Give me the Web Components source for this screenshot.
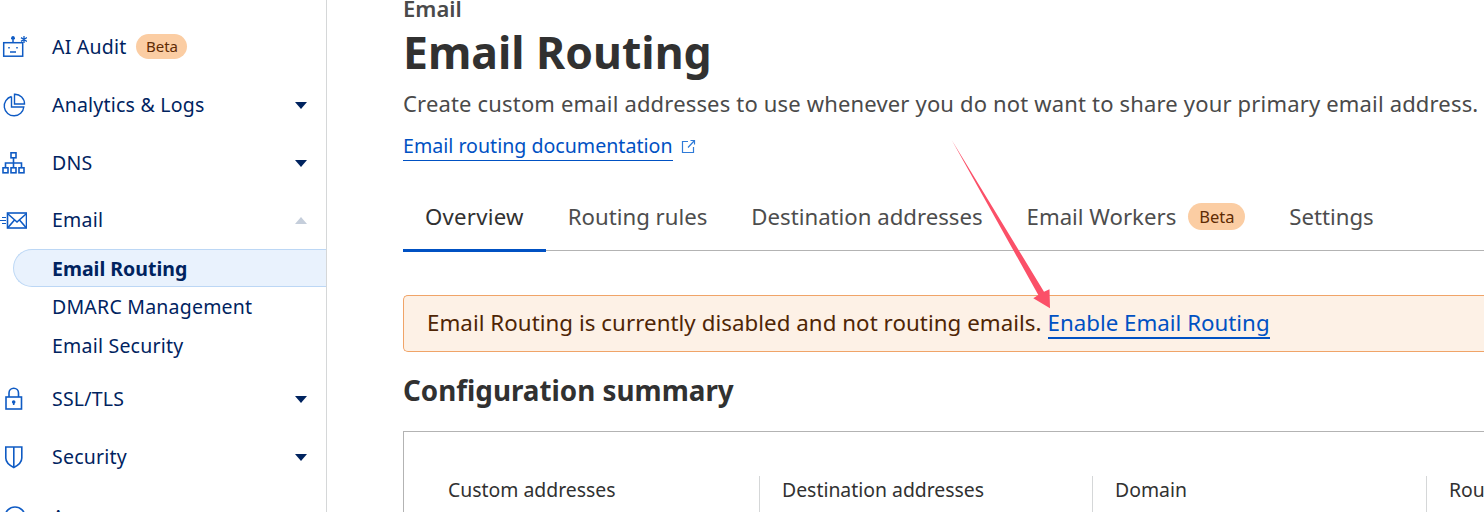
<!DOCTYPE html>
<html lang="en"><head><meta charset="utf-8"><title>Email Routing</title>
<style>
html,body{margin:0;padding:0;height:512px;width:1484px;overflow:hidden;background:#fff;font-family:"Noto Sans","Open Sans",sans-serif}
</style></head><body>
<template id="t-app"><style>
:host{display:flex;width:1484px;height:512px;overflow:hidden;position:relative;background:#fff}
::slotted(dash-sidebar){flex:0 0 327px}
::slotted(dash-main){flex:1 1 auto;min-width:0}
</style><slot></slot><svg style="position:absolute;left:0;top:0;pointer-events:none" width="1484" height="512" viewBox="0 0 1484 512" aria-hidden="true"><polygon points="951.700,140 1044,291.700 1049.500,289.300 1050,308.300 1033.300,298.300 1038.300,295" fill="#fb5068"/></svg></template>

<template id="t-side"><style>
:host{display:block;box-sizing:border-box;height:512px;border-right:1px solid #d5d7d8;overflow:hidden;padding-top:18px;color:#00235f;font-size:19.5px;letter-spacing:.22px}
</style><slot></slot></template>

<template id="t-nav"><style>
:host{display:flex;align-items:center;height:58px;padding-right:19px;box-sizing:border-box}
.i{flex:0 0 52px;display:flex;align-items:center;height:30px}
.l{display:flex;align-items:center;gap:10px;flex:1;padding-bottom:2px}
.c{width:0;height:0;border:6.5px solid transparent;border-top:7px solid #00235f;border-bottom:0}
:host([open]) .c{border-top:0;border-bottom:7px solid #c5cedb}
:host(:not([caret])) .c{display:none}
svg{display:block}
</style><div class="i"><slot name="icon"></slot></div><div class="l"><slot></slot></div><div class="c"></div></template>

<template id="t-sub"><style>
:host{display:flex;align-items:center;height:39px;margin-left:13px;padding-left:39px;box-sizing:border-box;color:#00235f;font-size:19.5px}
:host([active]){height:38px;font-weight:700;letter-spacing:0;background:#e9f2fd;border:1px solid #bcd7f5;border-right:0;border-radius:19px 0 0 19px;padding-left:38px;margin-top:-1px;margin-bottom:0}
</style><slot></slot></template>

<template id="t-badge"><style>
:host{display:inline-flex;align-items:center;justify-content:center;background:#fbcda3;color:#5f2b03;border-radius:13px;font-size:15px;letter-spacing:0;height:25px;width:51px}
:host([lg]){width:57px;height:27px;font-size:16.5px;border-radius:14px}
</style><slot></slot></template>

<template id="t-main"><style>
:host{display:block;padding:0 0 0 76px;margin-top:-3px;color:#313131;min-width:0}
.k{font-size:22px;font-weight:600;line-height:24px;color:#4a4a4a;margin-top:-1px}
h1{margin:0;font-size:44.500px;font-weight:700;line-height:60px;margin-top:2px}
p{margin:0;font-size:22px;letter-spacing:.17px;line-height:30px;color:#4a4a4a;margin-top:6px;white-space:nowrap}
.d{display:flex;align-items:center;gap:8px;margin-top:13px;height:30px;color:#0051c3;font-size:19.6px}
.d a{color:inherit;text-decoration:none;border-bottom:1px solid #0051c3;line-height:28px}
h2{margin:19px 0 0;font-size:27.800px;font-weight:700;line-height:38px}
</style><div class="k">Email</div><h1>Email Routing</h1>
<p>Create custom email addresses to use whenever you do not want to share your primary email address.</p>
<div class="d"><a href="#">Email routing documentation</a><svg width="15" height="15" viewBox="0 0 15 15" fill="none" stroke="#2f7bd8" stroke-width="1.2"><path d="M7 2.500H1.500v11h11V8"/><path d="M7 8.500 13.500 1.500M9.500 1.500h4v4"/></svg></div>
<slot name="tabs"></slot><slot name="banner"></slot><h2>Configuration summary</h2><slot name="summary"></slot></template>

<template id="t-tabs"><style>
:host{display:flex;margin-top:25px;border-bottom:1px solid #b3b3b3;box-sizing:content-box;height:64px}
</style><slot></slot></template>

<template id="t-tab"><style>
:host{display:flex;align-items:center;gap:12px;padding:0 22px 4px;height:64px;font-size:22.200px;color:#4d4d4d;box-sizing:border-box;white-space:nowrap}
:host([active]){color:#313131;letter-spacing:.25px;box-shadow:inset 0 -3px 0 #0051c3;height:66px;padding-bottom:6px}
</style><slot></slot></template>

<template id="t-banner"><style>
:host{display:flex;align-items:center;box-sizing:border-box;height:57px;margin-top:44px;padding:0 0 2px 23px;background:#fdf1e6;border:1px solid #f0a468;border-right:0;border-radius:5px 0 0 5px;color:#4f2505;font-size:22.300px;letter-spacing:.05px;white-space:nowrap;gap:6px}
a{color:#0051c3;letter-spacing:0;text-decoration:none;border-bottom:2px solid #0051c3;line-height:28px;margin-top:2px}
</style><slot></slot><a href="#"><slot name="link"></slot></a></template>

<template id="t-sum"><style>
:host{display:grid;grid-template-columns:355px 333px 334px 334px;margin-top:22px;border:1px solid #b3b3b3;border-right:0;border-bottom:0;box-sizing:border-box;height:100px;padding-top:44px}
</style><slot></slot></template>

<template id="t-cell"><style>
:host{display:block;box-sizing:border-box;padding-left:22px;height:50px;line-height:27px;font-size:19.400px;color:#313131;border-left:1px solid #d5d7d8;white-space:nowrap}
:host([first]){border-left:0;padding-left:44px}
</style><slot></slot></template>

<dash-app>
<dash-sidebar>
<nav-item><svg slot="icon" width="27" height="24" viewBox="0 0 27 24" fill="none" stroke="#0f5bc4" stroke-width="1.500"><rect x="3.700" y="7.700" width="19" height="13.500"/><path d="M13 7.500V3M11 3.500h4"/><circle cx="13" cy="2.700" r="1" fill="#0f5bc4"/><path d="M9 12v1.500M17 12v1.500M10 17h6"/><path d="M24 1v7M21 2.600l6 3.800M27 2.600l-6 3.800" stroke-width="1.300"/></svg>AI Audit <ui-badge>Beta</ui-badge></nav-item>
<nav-item caret><svg slot="icon" width="27" height="24" viewBox="0 0 27 24" fill="none" stroke="#0f5bc4" stroke-width="1.400"><path d="M11.500 3.500A9.800 9.800 0 1 0 23.800 14H11.500V3.500"/><path d="M14.500 1.200A9.500 9.500 0 0 1 24.500 11H14.500Z"/></svg>Analytics &amp; Logs</nav-item>
<nav-item caret><svg slot="icon" width="27" height="24" viewBox="0 0 27 24" fill="none" stroke="#0f5bc4" stroke-width="1.600"><rect x="11" y="1.800" width="5" height="5"/><rect x="3" y="16.800" width="5" height="5"/><rect x="11" y="16.800" width="5" height="5"/><rect x="19" y="16.800" width="5" height="5"/><path d="M13.500 7v10M5.500 17v-5h16v5"/></svg>DNS</nav-item>
<nav-item open caret style="padding-bottom:2px"><svg slot="icon" width="27" height="20" viewBox="0 0 27 20" fill="none" stroke="#0f5bc4" stroke-width="1.600"><rect x="7.500" y="3" width="19" height="15"/><path d="M8 4l9 8 9-8M8 17.500l6.500-7.500M26 17.500L19.500 10"/><path d="M2 7.500h4M0 10.500h6M2 13.500h4" stroke-width="1.200"/></svg>Email</nav-item>
<nav-sub active>Email Routing</nav-sub>
<nav-sub>DMARC Management</nav-sub>
<nav-sub>Email Security</nav-sub>
<nav-item caret style="margin-top:5px"><svg slot="icon" width="27" height="24" viewBox="0 0 27 24" fill="none" stroke="#0f5bc4" stroke-width="1.600"><rect x="6" y="10" width="15.500" height="12"/><path d="M9 10V6a4.700 4.700 0 0 1 9.500 0v4"/><circle cx="13.700" cy="15" r="1" fill="#0f5bc4"/><path d="M13.700 15v3"/></svg>SSL/TLS</nav-item>
<nav-item caret><svg slot="icon" width="27" height="24" viewBox="0 0 27 24" fill="none" stroke="#0f5bc4" stroke-width="1.600"><path d="M5.800 2h16v11c0 4-3 7-8 9.500-5-2.500-8-5.500-8-9.500Z"/><path d="M13.800 2v20"/></svg>Security</nav-item>
<nav-item style="margin-top:2px"><svg slot="icon" width="27" height="24" viewBox="0 0 27 24" fill="none" stroke="#0f5bc4" stroke-width="1.600"><circle cx="15" cy="12" r="10"/><path d="M15 8v1M15 12v5"/></svg>Access</nav-item>
</dash-sidebar>
<dash-main>
<tab-bar slot="tabs"><tab-item active>Overview</tab-item><tab-item>Routing rules</tab-item><tab-item>Destination addresses</tab-item><tab-item>Email Workers <ui-badge lg>Beta</ui-badge></tab-item><tab-item>Settings</tab-item></tab-bar>
<alert-banner slot="banner">Email Routing is currently disabled and not routing emails.<span slot="link">Enable Email Routing</span></alert-banner>
<summary-card slot="summary"><summary-cell first>Custom addresses</summary-cell><summary-cell>Destination addresses</summary-cell><summary-cell>Domain</summary-cell><summary-cell>Routing status</summary-cell></summary-card>
</dash-main>
</dash-app>
<script>
const defs={'dash-app':'t-app','dash-sidebar':'t-side','nav-item':'t-nav','nav-sub':'t-sub','ui-badge':'t-badge','dash-main':'t-main','tab-bar':'t-tabs','tab-item':'t-tab','alert-banner':'t-banner','summary-card':'t-sum','summary-cell':'t-cell'};
for(const [n,t] of Object.entries(defs)){customElements.define(n,class extends HTMLElement{constructor(){super();this.attachShadow({mode:'open'}).appendChild(document.getElementById(t).content.cloneNode(true));}});}
</script>
</body></html>
